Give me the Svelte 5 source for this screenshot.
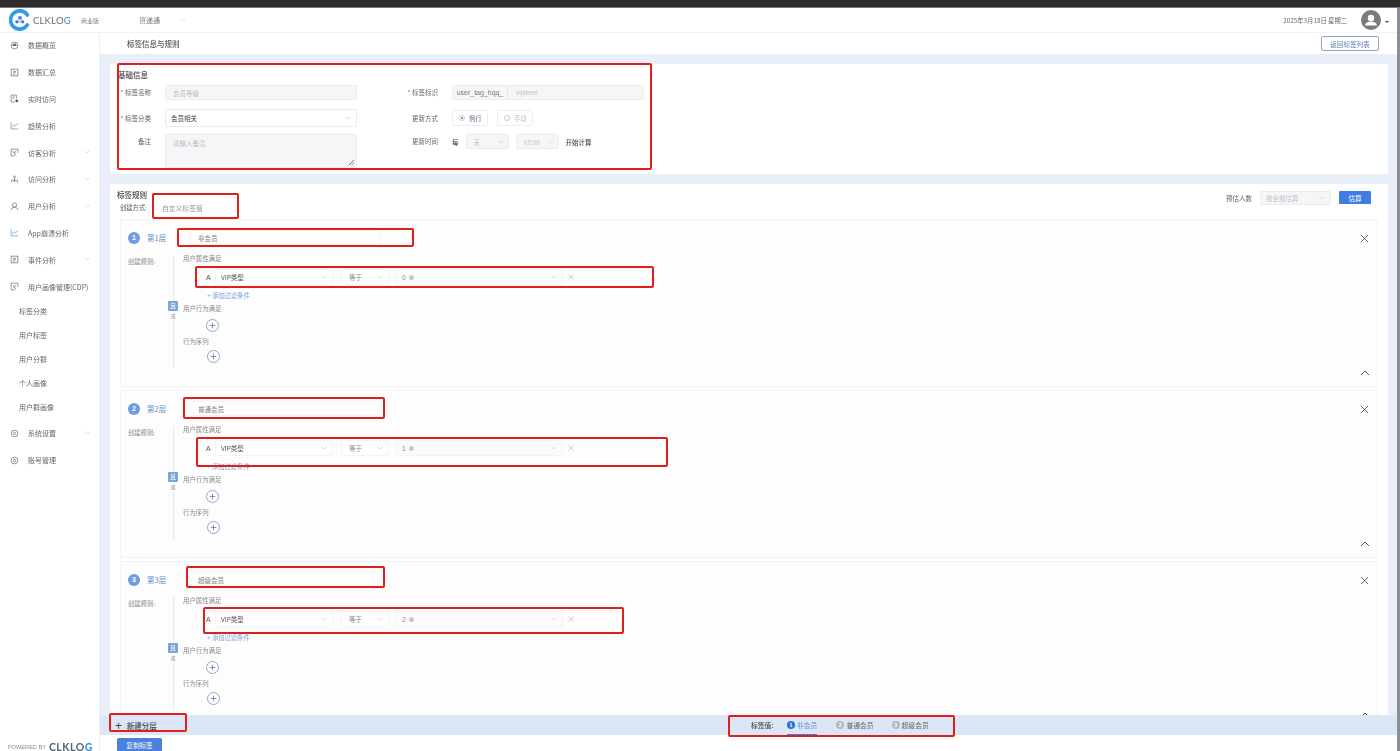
<script lang="ts">
	const menu = [
		{ label: '数据概览', icon: 'gauge', top: 1 },
		{ label: '数据汇总', icon: 'table' },
		{ label: '实时访问', icon: 'live' },
		{ label: '趋势分析', icon: 'trend' },
		{ label: '访客分析', icon: 'flag', arrow: true },
		{ label: '访问分析', icon: 'tree', arrow: true },
		{ label: '用户分析', icon: 'user', arrow: true },
		{ label: 'App崩溃分析', icon: 'trend' },
		{ label: '事件分析', icon: 'table', arrow: true },
		{ label: '用户画像管理(CDP)', icon: 'flag' }
	];
	const subMenu = ['标签分类', '用户标签', '用户分群', '个人画像', '用户群画像'];
	const tailMenu = [
		{ label: '系统设置', icon: 'gear', arrow: true },
		{ label: '账号管理', icon: 'gear' }
	];

	const layers = [
		{ n: 1, name: '非会员', value: '0' },
		{ n: 2, name: '普通会员', value: '1' },
		{ n: 3, name: '超级会员', value: '2' }
	];

	// red annotation boxes drawn over the screenshot
	const marks = [
		{ x: 117, y: 63, w: 535, h: 107 },
		{ x: 152, y: 193, w: 87, h: 26 },
		{ x: 177, y: 228, w: 237, h: 19 },
		{ x: 195, y: 266, w: 459, h: 22 },
		{ x: 183, y: 397, w: 202, h: 22 },
		{ x: 196, y: 437, w: 472, h: 30 },
		{ x: 186, y: 566, w: 199, h: 22 },
		{ x: 203, y: 607, w: 421, h: 27 },
		{ x: 109, y: 713, w: 78, h: 19 },
		{ x: 728, y: 715, w: 227, h: 22 }
	];
</script>

{#snippet chevron(cls = '')}
	<svg class="chev {cls}" viewBox="0 0 10 6"><path d="M1 1l4 4 4-4" /></svg>
{/snippet}

{#snippet menuIcon(name)}
	<svg class="m-icon" viewBox="0 0 12 12">
		{#if name === 'gauge'}
			<circle cx="6" cy="6" r="4.6" />
			<path d="M2 6h8M6 6l2-3" />
			<circle class="solid" cx="6" cy="5" r="1.8" />
		{:else if name === 'table'}
			<rect x="1.5" y="1.5" width="9" height="9" />
			<path d="M4 4.5h4M4 6.5h4M4 8.5h2" />
		{:else if name === 'live'}
			<path d="M8.5 6V1.5h-7v9h5M3.5 4h3M3.5 6.5h2" />
			<circle class="solid" cx="9" cy="9.2" r="1.8" />
		{:else if name === 'trend'}
			<path class="blue" d="M1.5 1.5v9h9.5M3 8l2.5-3 2 1.5L10.5 3" />
		{:else if name === 'flag'}
			<path d="M1.5 1.5h9v5M1.5 1.5v9h5M4 4l4 6M8 4L5 8" />
		{:else if name === 'tree'}
			<circle cx="6" cy="2.5" r="1.2" />
			<path d="M6 4v3M2 10V7h8v3M6 7v3" />
		{:else if name === 'user'}
			<circle cx="6" cy="4" r="2.8" />
			<path d="M1.5 11c.5-3 2-4 4.5-4s4 1 4.5 4" />
		{:else}
			<circle cx="6" cy="6" r="4.5" />
			<circle cx="6" cy="6" r="1.6" />
		{/if}
	</svg>
{/snippet}

{#snippet plus()}
	<span class="plus-btn"><svg viewBox="0 0 12 12"><path d="M6 3v6M3 6h6" /></svg></span>
{/snippet}

<div class="window">
	<div class="browser-bar"></div>

	<div class="frame">
		<div class="app">
			<header class="topbar">
				<div class="brand">
					<svg class="logo" viewBox="0 0 24 24">
						<path d="M20 6.5A10 10 0 1 0 20 17.5" fill="none" stroke="#2f9bea" stroke-width="4" stroke-linecap="round" />
						<circle cx="12" cy="9.5" r="2" fill="#3f7be0" />
						<circle cx="8.500" cy="14" r="1.7" fill="#3f7be0" />
						<circle cx="15" cy="14" r="1.7" fill="#3f7be0" />
						<path d="M12 9.5L8.500 14h6.500z" fill="none" stroke="#3f7be0" stroke-width=".8" />
					</svg>
					<span class="logo-text">CLKLO<em>G</em></span>
					<span class="edition">商业版</span>
				</div>
				<div class="project">货递通 {@render chevron()}</div>
				<div class="date">2025年3月18日 星期二</div>
				<div class="avatar">
					<svg viewBox="0 0 20 20">
						<circle cx="10" cy="10" r="10" fill="#7b7b7b" />
						<circle cx="10" cy="8" r="3.2" fill="#fff" />
						<path d="M4 15.500c.5-3 3-4 6-4s5.500 1 6 4z" fill="#fff" />
					</svg>
				</div>
				<span class="caret"></span>
			</header>

			<div class="body">
				<aside class="sidebar">
					<nav class="nav">
						{#each menu as item}
							<div class="nav-item">
								{@render menuIcon(item.icon)}
								<span>{item.label}</span>
								{#if item.arrow}{@render chevron('nav-chev')}{/if}
							</div>
						{/each}
						{#each subMenu as item}
							<div class="nav-sub">{item}</div>
						{/each}
						{#each tailMenu as item}
							<div class="nav-item">
								{@render menuIcon(item.icon)}
								<span>{item.label}</span>
								{#if item.arrow}{@render chevron('nav-chev')}{/if}
							</div>
						{/each}
					</nav>
					<div class="powered"><span>POWERED BY</span><b>CLKLO<em>G</em></b></div>
				</aside>

				<main class="main">
					<div class="page-head">
						<h1>标签信息与规则</h1>
						<button class="back-btn">返回标签列表</button>
					</div>

					<div class="content">
						<section class="card base-card">
							<h2>基础信息</h2>
							<div class="base-cols">
								<div class="col col-left">
									<div class="field">
										<label class="req">标签名称</label>
										<div class="input disabled"><span class="ph">会员等级</span></div>
									</div>
									<div class="field tall">
										<label class="req">标签分类</label>
										<div class="input plain-select"><span>会员相关</span>{@render chevron()}</div>
									</div>
									<div class="field area-field">
										<label>备注</label>
										<div class="input area disabled">
											<span class="ph">请输入备注</span>
											<svg class="grip" viewBox="0 0 8 8"><path d="M1 7l6-6M4 7l3-3" /></svg>
										</div>
									</div>
								</div>
								<div class="col col-right">
									<div class="field">
										<label class="req">标签标识</label>
										<div class="input disabled group">
											<span class="prefix">user_tag_hqq_</span>
											<span class="ph">viplevel</span>
										</div>
									</div>
									<div class="field tall">
										<label>更新方式</label>
										<div class="radios">
											<span class="radio on"><i></i>例行</span>
											<span class="radio"><i></i>手动</span>
										</div>
									</div>
									<div class="field">
										<label>更新时间</label>
										<div class="time">
											<b>每</b>
											<div class="input disabled small"><span class="ph">天</span>{@render chevron()}</div>
											<div class="input disabled small"><span class="ph">03:00</span>{@render chevron()}</div>
											<b>开始计算</b>
										</div>
									</div>
								</div>
							</div>
						</section>

						<section class="card rule-card">
							<div class="rule-head">
								<div>
									<h2>标签规则</h2>
									<div class="create-way"><span>创建方式:</span><em>自定义标签值</em></div>
								</div>
								<div class="estimate">
									<span>预估人数</span>
									<div class="input disabled est-select"><span class="ph">按全部估算</span>{@render chevron()}</div>
									<button class="primary">估算</button>
								</div>
							</div>

							<div class="layers">
								{#each layers as layer}
									<article class="layer">
										<div class="layer-head">
											<span class="num">{layer.n}</span>
											<span class="layer-title">第{layer.n}层</span>
											<div class="layer-name">{layer.name}</div>
											<svg class="close" viewBox="0 0 10 10"><path d="M1 1l8 8M9 1l-8 8" /></svg>
										</div>
										<div class="layer-body">
											<div class="rule-label">创建规则:</div>
											<div class="logic">
												<div class="rail"></div>
												<div class="logic-tag"><span>且</span><small>或</small></div>
												<div class="logic-text">用户属性满足</div>
												<div class="cond">
													<span class="type">A</span>
													<div class="sel sel-attr"><span>VIP类型</span>{@render chevron()}</div>
													<div class="sel sel-op"><span>等于</span>{@render chevron()}</div>
													<div class="sel sel-val"><span class="val">{layer.value}<i></i></span>{@render chevron()}</div>
													<svg class="cond-x" viewBox="0 0 10 10"><path d="M1 1l8 8M9 1l-8 8" /></svg>
												</div>
												<div class="add-filter">+ 添加过滤条件</div>
												<div class="logic-text behavior">用户行为满足</div>
												<div class="plus-row">{@render plus()}</div>
												<div class="logic-text seq">行为序列</div>
												<div class="plus-row">{@render plus()}</div>
											</div>
										</div>
										<svg class="collapse" viewBox="0 0 10 6"><path d="M1 5l4-4 4 4" /></svg>
									</article>
								{/each}
							</div>
						</section>
					</div>

					<div class="tabs-bar">
						<div class="new-layer"><span>+</span> 新建分层</div>
						<div class="tabs">
							<span class="tabs-label">标签值:</span>
							{#each layers as layer, i}
								<span class="tab" class:active={i === 0}><i>{layer.n}</i>{layer.name}</span>
							{/each}
						</div>
					</div>

					<div class="foot"><button class="primary copy">复制标签</button></div>
				</main>
			</div>
		</div>
		<div class="edge"></div>
	</div>

	{#each marks as m}
		<div class="mark" style="left:{m.x}px;top:{m.y}px;width:{m.w}px;height:{m.h}px"></div>
	{/each}
</div>

<style>
	:global(body) {
		margin: 0;
		background: #fff;
	}

	.window {
		position: relative;
		width: 1400px;
		height: 751px;
		overflow: hidden;
		display: flex;
		flex-direction: column;
		font-family: 'Noto Sans CJK SC', 'Liberation Sans', sans-serif;
		font-size: 7px;
		color: #666;
		/* the source capture is a soft, downscaled image */
		filter: blur(0.35px);
	}

	.browser-bar {
		height: 8px;
		background: #2c2c2c;
		border-bottom: 1px solid #777;
		box-sizing: border-box;
		flex: none;
	}

	.frame {
		flex: 1;
		display: flex;
		min-height: 0;
	}

	.app {
		flex: 1;
		display: flex;
		flex-direction: column;
		min-width: 0;
	}

	.edge {
		width: 3px;
		background: #8a8f96;
	}

	/* top bar */
	.topbar {
		height: 25px;
		flex: none;
		display: flex;
		align-items: center;
		border-bottom: 1px solid #f2f3f5;
		box-sizing: border-box;
	}

	.brand {
		width: 139px;
		display: flex;
		align-items: center;
		padding-left: 9px;
		box-sizing: border-box;
	}

	.logo {
		width: 22px;
		height: 22px;
		flex: none;
	}

	.logo-text {
		width: 38px;
		margin-left: 2px;
		font: 400 9.5px 'Lato', sans-serif;
		letter-spacing: 0.2px;
		color: #5f6c78;
		white-space: nowrap;
	}

	.logo-text em,
	.powered em {
		font-style: normal;
		color: #2f8fdc;
	}

	.edition {
		margin-left: 10px;
		font-size: 6px;
		color: #777;
	}

	.project {
		display: flex;
		align-items: center;
		gap: 20px;
		font-size: 7px;
		color: #777;
	}

	.date {
		margin-left: auto;
		font-size: 6.3px;
		color: #666;
		margin-right: 14px;
	}

	.avatar {
		width: 20px;
		height: 20px;
		margin-right: 4px;
	}

	.avatar svg {
		display: block;
	}

	.caret {
		width: 0;
		height: 0;
		border: 2px solid transparent;
		border-top: 2px solid #444;
		margin: 6px 8px 0 0;
	}

	.chev {
		width: 6px;
		height: 4px;
		flex: none;
		fill: none;
		stroke: #bbb;
		stroke-width: 0.9;
	}

	.body {
		flex: 1;
		display: flex;
		min-height: 0;
	}

	/* sidebar */
	.sidebar {
		width: 100px;
		flex: none;
		display: flex;
		flex-direction: column;
		border-right: 1px solid #eef0f3;
		box-sizing: border-box;
		background: #fff;
	}

	.nav {
		flex: 1;
		margin-top: -1px;
	}

	.nav-item {
		height: 26.8px;
		display: flex;
		align-items: center;
		padding-left: 10px;
		gap: 9px;
		font-size: 7px;
		color: #666;
		box-sizing: border-box;
		position: relative;
	}

	.m-icon {
		width: 9px;
		height: 9px;
		flex: none;
		fill: none;
		stroke: #666;
		stroke-width: 0.9;
	}

	.m-icon .solid {
		fill: #555;
		stroke: none;
	}

	.m-icon .blue {
		stroke: #5b8ec9;
	}

	:global(.nav-chev) {
		position: absolute;
		right: 9px;
		top: 11px;
	}

	.nav-sub {
		height: 24px;
		line-height: 23px;
		padding-left: 19px;
		color: #666;
	}

	.powered {
		height: 9px;
		display: flex;
		align-items: center;
		padding: 0 0 0 8px;
		gap: 3px;
		font: 400 5.6px 'Liberation Sans', sans-serif;
		color: #8b8b8b;
	}

	.powered b {
		font: 700 10.5px 'Lato', sans-serif;
		color: #55636f;
		letter-spacing: 0.5px;
	}

	/* main */
	.main {
		flex: 1;
		min-width: 0;
		display: flex;
		flex-direction: column;
	}

	.page-head {
		height: 21px;
		flex: none;
		display: flex;
		align-items: center;
		justify-content: space-between;
		padding: 0 18px 0 27px;
		background: #fff;
	}

	h1 {
		margin: 0;
		font-size: 7.5px;
		font-weight: 500;
		color: #555;
	}

	.back-btn {
		width: 58px;
		height: 15px;
		padding: 0;
		background: #fff;
		border: 1px solid #8ea6c5;
		border-radius: 2px;
		color: #5b7cae;
		font: inherit;
		font-size: 6.6px;
	}

	.content {
		flex: 1;
		min-height: 0;
		overflow: hidden;
		background: #e8eff9;
		padding: 10px 9px 0 10px;
		display: flex;
		flex-direction: column;
		gap: 10px;
	}

	.card {
		background: #fff;
		border-radius: 3px;
		flex: none;
	}

	h2 {
		margin: 0;
		font-size: 7.5px;
		font-weight: 500;
		color: #444;
		line-height: 10px;
	}

	.base-card {
		height: 110px;
		padding: 6px 0 0 8px;
		box-sizing: border-box;
	}

	.base-cols {
		display: flex;
		margin-top: 5px;
	}

	.col-left {
		width: 239px;
	}

	.col-right {
		margin-left: 48px;
		width: 239px;
	}

	.field {
		display: flex;
		align-items: center;
		height: 15px;
		margin-bottom: 9px;
	}

	.field.tall {
		height: 18px;
		margin-bottom: 7px;
	}

	.field.area-field {
		height: 34px;
		align-items: flex-start;
	}

	.col-right .field.tall {
		margin-bottom: 7px;
	}

	label {
		width: 33px;
		flex: none;
		margin-right: 14px;
		text-align: right;
		font-size: 6.5px;
		color: #666;
		line-height: 15px;
	}

	.req::before {
		content: '* ';
		color: #e5484d;
	}

	.input {
		height: 100%;
		flex: 1;
		box-sizing: border-box;
		border: 1px solid #eaecef;
		border-radius: 2px;
		display: flex;
		align-items: center;
		justify-content: space-between;
		padding: 0 5px;
		font-size: 6.5px;
		color: #555;
		background: #fff;
	}

	.input.disabled {
		background: #f5f6f8;
	}

	.ph {
		color: #bcbfc4;
	}

	.input.plain-select {
		color: #444;
	}

	.col-left .input .ph {
		padding-left: 2px;
	}

	.area {
		align-items: flex-start;
		position: relative;
		padding-top: 3px;
	}

	.grip {
		position: absolute;
		right: 1px;
		bottom: 1px;
		width: 7px;
		height: 7px;
		fill: none;
		stroke: #444;
		stroke-width: 0.8;
	}

	.group {
		justify-content: flex-start;
		padding: 0;
	}

	.prefix {
		width: 55px;
		height: 100%;
		display: flex;
		align-items: center;
		justify-content: center;
		border-right: 1px solid #e6e8eb;
		font: 400 7px 'Liberation Sans', sans-serif;
		color: #777;
		box-sizing: border-box;
		margin-right: 8px;
	}

	.group .ph {
		font: 400 6.5px 'Liberation Sans', sans-serif;
	}

	.radios {
		display: flex;
		gap: 9px;
		height: 16px;
	}

	.radio {
		width: 36px;
		border: 1px solid #edeef0;
		border-radius: 2px;
		display: flex;
		align-items: center;
		gap: 4px;
		padding-left: 6px;
		box-sizing: border-box;
		font-size: 6.3px;
		color: #bbb;
	}

	.radio.on {
		color: #5c6f8c;
	}

	.radio i {
		width: 4px;
		height: 4px;
		border: 1px solid #ccc;
		border-radius: 50%;
	}

	.radio.on i {
		background: radial-gradient(#999 35%, #fff 40%);
	}

	.time {
		display: flex;
		align-items: center;
		gap: 7px;
		height: 15px;
	}

	.time b {
		font-weight: 500;
		color: #444;
		font-size: 6.5px;
	}

	.input.small {
		flex: none;
		width: 43px;
		padding: 0 4px 0 7px;
	}

	/* rule card */
	.rule-card {
		padding: 6px 10px 0 10px;
	}

	.rule-head {
		display: flex;
		justify-content: space-between;
		height: 29px;
	}

	.rule-head h2 {
		margin-left: -3px;
	}

	.create-way {
		display: flex;
		gap: 15px;
		margin-top: 3px;
		font-size: 6.3px;
		line-height: 10px;
		color: #555;
	}

	.create-way em {
		font-style: normal;
		color: #999;
		font-size: 6.8px;
	}

	.estimate {
		display: flex;
		align-items: flex-start;
		gap: 8px;
		margin-right: 7px;
		padding-top: 1px;
		line-height: 14px;
		font-size: 6.5px;
		color: #666;
	}

	.est-select {
		width: 71px;
		height: 14px;
		flex: none;
	}

	.primary {
		background: #3f7be0;
		color: #fff;
		border: none;
		border-radius: 1px;
		padding: 0;
		font: inherit;
		font-size: 6.6px;
	}

	.estimate .primary {
		width: 32px;
		height: 13px;
	}

	.layers {
		display: flex;
		flex-direction: column;
		gap: 3px;
	}

	.layer {
		height: 168px;
		flex: none;
		box-sizing: border-box;
		border: 1px solid #f2f3f5;
		background: #fdfdfd;
		position: relative;
		padding: 0 0 0 7px;
	}

	.layer-head {
		height: 35px;
		display: flex;
		align-items: center;
	}

	.num {
		width: 12px;
		height: 12px;
		border-radius: 50%;
		background: #6f9be0;
		color: #fff;
		font: 700 7px/12px 'Liberation Sans', sans-serif;
		text-align: center;
	}

	.layer-title {
		margin-left: 7px;
		color: #5f8fd0;
		font-size: 7.5px;
		width: 42px;
	}

	.layer-name {
		width: 191px;
		height: 15px;
		border: 1px solid #f3f4f6;
		box-sizing: border-box;
		padding-left: 8px;
		line-height: 14px;
		font-size: 6.5px;
		color: #888;
	}

	.close {
		position: absolute;
		right: 8px;
		top: 14px;
		width: 9px;
		height: 9px;
		fill: none;
		stroke: #444;
		stroke-width: 0.9;
	}

	.layer-body {
		display: flex;
	}

	.rule-label {
		width: 45px;
		flex: none;
		font-size: 6.3px;
		color: #888;
		line-height: 10px;
		padding-top: 2px;
	}

	.logic {
		position: relative;
		padding-left: 10px;
		flex: 1;
		margin-top: -1px;
	}

	.rail {
		position: absolute;
		left: 0;
		top: 1px;
		height: 113px;
		border-left: 1px solid #e6e8ec;
	}

	.logic-tag {
		position: absolute;
		left: -5px;
		top: 47px;
		width: 10px;
		text-align: center;
	}

	.logic-tag span {
		display: block;
		height: 10px;
		background: #7ea4dc;
		color: #fff;
		font-size: 6px;
		line-height: 10px;
		border-radius: 1px;
	}

	.logic-tag small {
		display: block;
		background: #fff;
		font-size: 5px;
		line-height: 9px;
		color: #777;
	}

	.logic-text {
		font-size: 6.4px;
		line-height: 10px;
		color: #888;
	}

	.cond {
		display: flex;
		align-items: center;
		margin: 5px 0 0 23px;
		height: 16px;
		gap: 6px;
	}

	.type {
		width: 6px;
		font: 400 7px 'Liberation Sans', sans-serif;
		color: #555;
	}

	.sel {
		height: 16px;
		box-sizing: border-box;
		border: 1px solid #f3f4f5;
		background: #fff;
		border-radius: 2px;
		display: flex;
		align-items: center;
		justify-content: space-between;
		padding: 0 5px;
		font-size: 6.5px;
		color: #555;
	}

	.sel-attr {
		width: 118px;
		margin-left: -3px;
		margin-right: 2px;
	}

	.sel-op {
		width: 48px;
		padding-left: 7px;
		color: #888;
	}

	.sel-val {
		width: 168px;
		padding-left: 6px;
		background: #fbfbfb;
	}

	.val {
		display: inline-flex;
		align-items: center;
		gap: 3px;
		color: #888;
		font: 400 6.5px 'Liberation Sans', sans-serif;
	}

	.val i {
		width: 5px;
		height: 5px;
		border-radius: 50%;
		background: #c8c8c8;
	}

	.cond-x {
		width: 6px;
		height: 6px;
		margin-left: -1px;
		fill: none;
		stroke: #aaa;
		stroke-width: 1;
	}

	.add-filter {
		margin: 6px 0 0 24px;
		line-height: 10px;
		font-size: 6.3px;
		color: #82a3d6;
	}

	.behavior {
		margin-top: 3px;
	}

	.seq {
		margin-top: 5px;
	}

	.plus-row {
		margin: 5px 0 0 23px;
		height: 13px;
	}

	.seq + .plus-row {
		margin: 3px 0 0 24px;
	}

	.plus-btn {
		display: block;
		width: 13px;
		height: 13px;
		box-sizing: border-box;
		border: 1px solid #93a6cc;
		border-radius: 50%;
		background: #fff;
	}

	.plus-btn svg {
		display: block;
		width: 11px;
		height: 11px;
		fill: none;
		stroke: #6d87bb;
		stroke-width: 1;
	}

	.collapse {
		position: absolute;
		right: 7px;
		bottom: 10px;
		width: 10px;
		height: 6px;
		fill: none;
		stroke: #444;
		stroke-width: 0.9;
	}

	/* bottom */
	.tabs-bar {
		height: 20px;
		flex: none;
		background: #dbe6f6;
		position: relative;
		display: flex;
		align-items: center;
	}

	.new-layer {
		margin-left: 15px;
		font-size: 7.5px;
		font-weight: 500;
		color: #444;
	}

	.new-layer span {
		font: 400 12px/10px 'Liberation Sans', sans-serif;
		margin-right: 3px;
		vertical-align: -1px;
	}

	.tabs {
		position: absolute;
		left: 651px;
		top: 0;
		height: 20px;
		display: flex;
		align-items: center;
		font-size: 6.8px;
		color: #555;
	}

	.tabs-label {
		width: 36px;
		font-weight: 500;
		color: #444;
	}

	.tab {
		display: flex;
		align-items: center;
		gap: 2px;
		margin-right: 18px;
		height: 20px;
		box-sizing: border-box;
		color: #666;
	}

	.tab i {
		width: 8px;
		height: 8px;
		border-radius: 50%;
		background: #b4b8be;
		color: #fff;
		font: 700 5.500px/8px 'Liberation Sans', sans-serif;
		text-align: center;
	}

	.tab.active {
		color: #6a93d6;
		border-bottom: 1px solid #3f7be0;
		padding-top: 1px;
		margin-right: 19px;
	}

	.tab.active i {
		background: #2f6fd6;
	}

	.foot {
		height: 16px;
		flex: none;
		background: #fff;
		padding: 3px 0 0 17px;
		box-sizing: border-box;
	}

	.copy {
		display: block;
		width: 45px;
		height: 14px;
		background: #4a80de;
		border-radius: 2px 2px 0 0;
	}

	/* annotation overlay */
	.mark {
		position: absolute;
		box-sizing: border-box;
		border: 2.5px solid #df1f1b;
		border-radius: 2px;
		pointer-events: none;
	}
</style>
